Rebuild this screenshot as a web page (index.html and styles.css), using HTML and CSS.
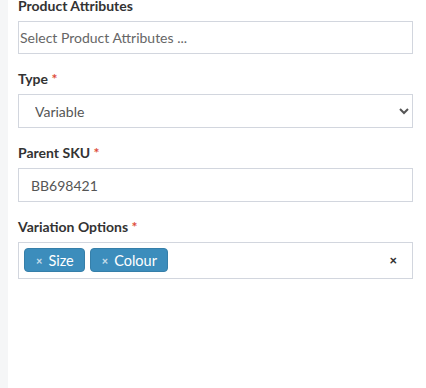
FILE: index.html
```html
<!DOCTYPE html>
<html lang="en">
<head>
    <meta charset="UTF-8">
    <meta name="viewport" content="width=device-width, initial-scale=1.0">
    <title>Product Variations</title>
    <link rel="stylesheet" href="styles.css">
</head>
<body>

    <div class="side-strip"></div>

    <div class="panel">
        <!-- Product Attributes -->
        <div class="form-group first">
            <label>Product Attributes</label>
            <div class="multi-select">
                <span class="placeholder">Select Product Attributes ...</span>
            </div>
        </div>

        <!-- Type -->
        <div class="form-group">
            <label for="type">Type <span class="required">*</span></label>
            <select id="type" class="form-control">
                <option>Variable</option>
                <option>Simple</option>
            </select>
        </div>

        <!-- Parent SKU -->
        <div class="form-group">
            <label for="sku">Parent SKU <span class="required">*</span></label>
            <input type="text" id="sku" class="form-control" value="BB698421">
        </div>

        <!-- Variation Options -->
        <div class="form-group">
            <label>Variation Options <span class="required">*</span></label>
            <div class="multi-select tags">
                <span class="tag"><span class="tag-remove">×</span>Size</span>
                <span class="tag"><span class="tag-remove">×</span>Colour</span>
                <span class="clear-all">×</span>
            </div>
        </div>
    </div>

</body>
</html>
```

FILE: styles.css
```css
body {
    font-family: Lato, "Open Sans", sans-serif;
    font-size: 14px;
    background-color: #ffffff;
    margin: 0;
    display: flex;
    height: 100vh;
    overflow: hidden;
}

.side-strip {
    width: 8px;
    background-color: #f5f6f7;
    flex-shrink: 0;
}

.panel {
    flex: 1;
    padding: 0 13px 0 10px;
}

.form-group {
    margin-bottom: 15px;
}

.form-group.first {
    margin-top: -4px;
}

label {
    display: block;
    font-weight: bold;
    color: #333;
    line-height: 20px;
    margin-bottom: 5px;
}

.required {
    color: #dd4b39;
}

.form-control {
    display: block;
    width: 100%;
    height: 34px;
    padding: 6px 12px;
    font-family: inherit;
    font-size: 14px;
    color: #555;
    background-color: #fff;
    border: 1px solid #d2d6de;
    border-radius: 0;
    box-sizing: border-box;
}

.multi-select {
    display: flex;
    align-items: center;
    min-height: 33px;
    border: 1px solid #d2d6de;
    box-sizing: border-box;
    padding: 0 1px;
}

.placeholder {
    color: #666;
}

.multi-select.tags {
    min-height: 37px;
    padding: 5px 0 6px 5px;
    gap: 5px;
}

.tag {
    display: inline-flex;
    align-items: center;
    height: 24px;
    box-sizing: border-box;
    padding: 0 10px 0 11px;
    background-color: #3c8dbc;
    border: 1px solid #367fa9;
    border-radius: 4px;
    color: #fff;
    font-size: 14.5px;
}

.tag-remove {
    font-size: 11px;
    font-weight: 900;
    color: rgba(255, 255, 255, 0.7);
    margin-right: 6px;
}

.clear-all {
    margin-left: auto;
    margin-right: 15px;
    font-size: 13px;
    font-weight: 900;
    color: #333;
}
```
